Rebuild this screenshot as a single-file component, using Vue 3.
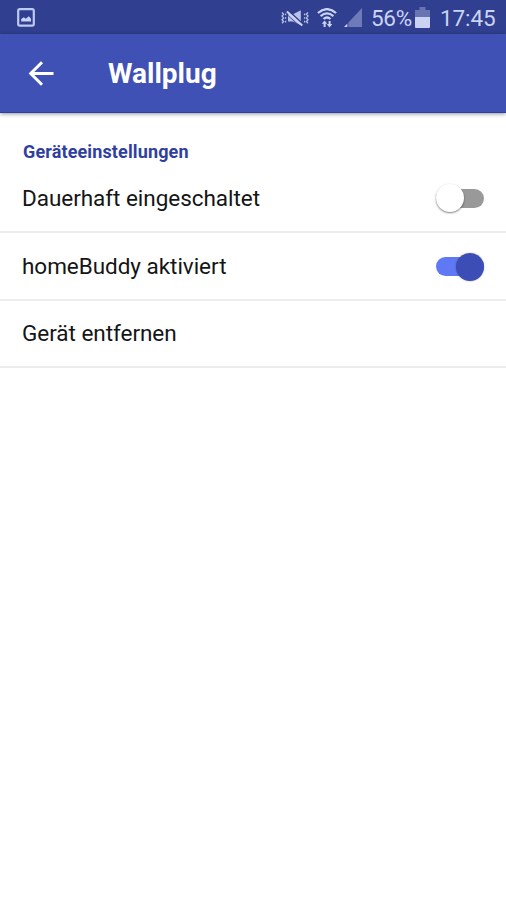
<script setup>
import { ref } from 'vue'

const rows = ref([
  { label: 'Dauerhaft eingeschaltet', on: false, size: 'first' },
  { label: 'homeBuddy aktiviert', on: true, size: 'second' },
  { label: 'Gerät entfernen', size: 'third' },
])

function toggle(row) {
  if ('on' in row) row.on = !row.on
}
</script>

<template>
  <div class="screen">
    <div class="status">
      <svg class="picture" width="18" height="19" viewBox="0 0 18 19">
        <rect x="1.2" y="1.2" width="15.6" height="16.4" rx="1.6" fill="none" stroke="#bcc9f0" stroke-width="2.2" />
        <path d="M4.2 13.6V11l2.6-1.8 2 1.5 3-2.5 2.2 2.6v2.8z" fill="#c7d2f5" />
      </svg>
      <svg class="mute" width="28" height="18" viewBox="0 0 28 18" fill="none" stroke="#b9c2e6">
        <path d="M1 3.5l1.6 1.8L1 7.1l1.6 1.8L1 10.7l1.6 1.8L1 14.3M27 3.5l-1.6 1.8L27 7.1l-1.6 1.8 1.6 1.8-1.6 1.8 1.6 1.8" stroke-width="1.3" />
        <path d="M4.6 4.6v1.6M4.6 8.2v1.6M4.6 11.8v1.6M23.6 4.6v1.6M23.6 8.2v1.6M23.6 11.8v1.6" stroke-width="1.3" />
        <path d="M7 5.5h4.5L19.8 1.2v15L12 12.5H7z" fill="#b9c2e6" stroke="none" />
        <path d="M7.4 1.7L22 15.4" stroke="#303f90" stroke-width="1.8" />
        <path d="M5.9 2.6L21.3 16.6" stroke="#cbd3f2" stroke-width="2" />
        <path d="M5 4.6L19 17.4" stroke="#303f90" stroke-width="0.8" />
      </svg>
      <svg class="wifi" width="20" height="20" viewBox="0 0 20 20" fill="none" stroke="#cbd3f2" stroke-width="2.2">
        <path d="M.9 5Q10-2.8 19.1 5M3.6 8.1Q10 2.8 16.4 8.1M6.5 11Q10 8 13.5 11" />
        <path d="M7.6 19v-5M12.6 13v5" stroke-width="2" />
        <path d="M4.7 15.8L7.6 12.4l2.6 3.4zM9.8 16h5.5l-2.8 3.6z" fill="#cbd3f2" stroke="none" />
      </svg>
      <svg class="signal" width="18" height="19" viewBox="0 0 18 19">
        <path d="M4.4 19v-4.6L18 0v19z" fill="#6f7bb8" />
        <path d="M0 19l3.4-3.6V19z" fill="#cbd3f2" />
      </svg>
      <span class="percent">56%</span>
      <svg class="battery" width="15" height="21" viewBox="0 0 15 21">
        <path d="M4.5 0h6v3H15v8H0V3h4.5z" fill="#6975b3" />
        <path d="M0 10h15v10a1 1 0 0 1-1 1H1a1 1 0 0 1-1-1z" fill="#cbd3f2" />
      </svg>
      <span class="clock">17:45</span>
    </div>

    <header class="bar">
      <svg class="back" width="26" height="26" viewBox="0 0 26 26" fill="none" stroke="#fff" stroke-width="3">
        <path d="M25.5 12.5H3M14 1.2L2.7 12.5 14 23.8" />
      </svg>
      <h1>Wallplug</h1>
    </header>

    <main>
      <h2>Geräteeinstellungen</h2>
      <div v-for="row in rows" :key="row.label" class="row" :class="row.size" @click="toggle(row)">
        <span class="label">{{ row.label }}</span>
        <span v-if="'on' in row" class="switch" :class="{ on: row.on }">
          <span class="thumb"></span>
        </span>
      </div>
    </main>
  </div>
</template>

<style>
body {
  margin: 0;
  background: #fff;
}
</style>

<style scoped>
.screen {
  min-height: 900px;
  background: #fff;
  font-family: Roboto, "Liberation Sans", sans-serif;
  color: #151515;
}
.status {
  display: flex;
  align-items: center;
  box-sizing: border-box;
  height: 34px;
  padding: 1px 11px 0 17px;
  background: #303f90;
  color: #cbd3f2;
  font-size: 22.5px;
  white-space: nowrap;
}
.status svg {
  flex: none;
}
.mute {
  margin-left: auto;
}
.wifi {
  margin-left: 8px;
}
.signal {
  margin-left: 7px;
}
.percent {
  width: 42px;
  margin-left: 9px;
  letter-spacing: -0.3px;
}
.battery {
  margin-left: 2px;
}
.clock {
  width: 55px;
  margin-left: 10px;
  letter-spacing: -0.1px;
}
.bar {
  display: flex;
  align-items: center;
  box-sizing: border-box;
  height: 79px;
  padding: 2px 0 0 28px;
  border-bottom: 1px solid #303f9f;
  background: #3f51b5;
  color: #fff;
  box-shadow: 0 1px 4px rgba(0, 0, 0, 0.42);
}
h1 {
  margin: 0 0 0 54px;
  font-size: 28px;
  line-height: 34px;
  font-weight: 700;
}
h2 {
  margin: 0;
  padding: 27px 0 0 23px;
  font-size: 18px;
  line-height: 24px;
  font-weight: 700;
  letter-spacing: 0.13px;
  color: #303f9f;
}
.row {
  display: flex;
  align-items: center;
  justify-content: space-between;
  box-sizing: border-box;
  height: 68px;
  padding: 0 22px 0 22px;
  border-bottom: 2px solid #ececec;
}
.first {
  height: 69px;
}
.third {
  height: 67px;
  padding-bottom: 1px;
}
.label {
  font-size: 22.5px;
  line-height: 30px;
  letter-spacing: -0.04px;
}
.switch {
  display: flex;
  align-items: center;
  box-sizing: border-box;
  width: 48px;
  height: 19px;
  margin-top: 1px;
  border-radius: 10px;
  background: #999;
}
.thumb {
  flex: none;
  width: 28px;
  height: 28px;
  border-radius: 50%;
  background: #fff;
  box-shadow: 0 1px 2px rgba(0, 0, 0, 0.5);
}
.switch.on {
  justify-content: flex-end;
  background: #5f79f5;
}
.on .thumb {
  background: #3c4db5;
  box-shadow: 0 0 2px rgba(0, 0, 0, 0.3);
}
</style>
